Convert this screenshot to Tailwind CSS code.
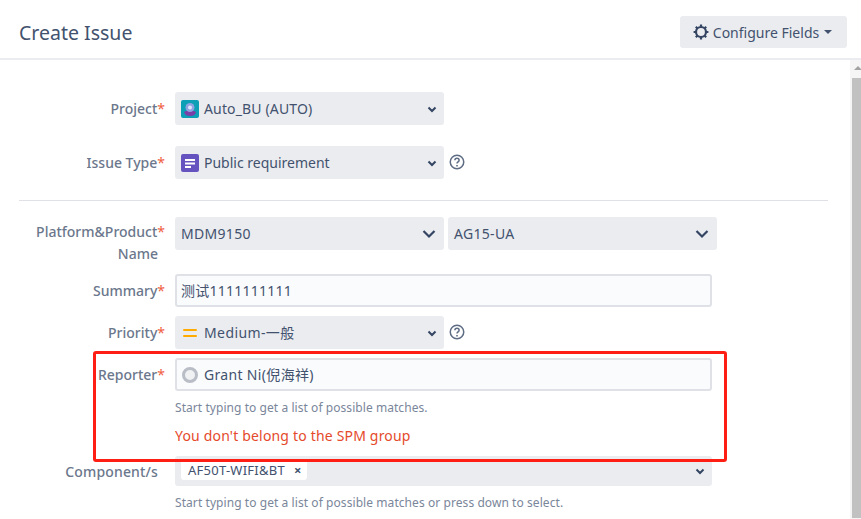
<!DOCTYPE html>
<html lang="en">
<head>
  <meta charset="UTF-8" />
  <title>Create Issue</title>
  <script src="https://cdn.jsdelivr.net/npm/@tailwindcss/browser@4"></script>
</head>
<body class="relative w-[861px] h-[519px] overflow-hidden bg-white text-[14px] text-[#6b778c] font-['Noto_Sans','Noto_Sans_CJK_SC',sans-serif]">
  <header class="h-[60px] border-b-2 border-[#ebecf0] pl-[19px] pr-[14px] pt-[16px] flex justify-between items-start">
    <h2 class="text-[19.5px] leading-[34px] text-[#42526e]">Create Issue</h2>
    <button class="h-[32px] w-[167px] bg-[#ebecf0] rounded-[3px] flex items-center justify-center gap-[4px] text-[#42526e]">
      <svg class="w-[16px] h-[16px] -ml-[2px]" viewBox="0 0 16 16" fill="none" stroke="#344563"><circle cx="8" cy="8" r="5" stroke-width="2.2"/><path d="M8 .6v2.4M8 13v2.4M.6 8H3M13 8h2.4M2.8 2.8l1.7 1.7M11.5 11.5l1.7 1.7M2.8 13.2l1.7-1.7M11.5 4.5l1.7-1.7" stroke-width="2.2"/></svg>
      <span>Configure Fields</span>
      <span class="w-0 h-0 border-x-[4px] border-x-transparent border-t-[4px] border-t-[#42526e] ml-[1px]"></span>
    </button>
  </header>

  <!-- scrollbar -->
  <div class="absolute right-0 top-[60px] bottom-0 w-[11px] bg-[#f5f5f5]">
    <div class="ml-[4px] mt-[6px] w-0 h-0 border-x-[4px] border-x-transparent border-b-[4px] border-b-[#a3a3a3]"></div>
    <div class="ml-[2px] mt-[8px] h-[440px] bg-[#c1c1c1]"></div>
  </div>

  <form class="pl-[19px] pr-[33px] pt-[32px]">
    <div class="flex h-[33px]">
      <label class="w-[146px] text-right font-medium leading-[33px]">Project<span class="text-[#f0603f] font-normal">*</span></label>
      <div class="ml-[10px] w-[269px] h-[33px] bg-[#ebecf0] rounded-[3px] flex items-center pl-[6px] pr-[6px] text-[#42526e]">
        <svg class="w-[18px] h-[18px] mr-[5px]" viewBox="0 0 18 18"><rect width="18" height="18" rx="2" fill="#0c9fb5"/><path d="M3 12l2-1 8 0 2 1c-1 3-3 4-6 4s-5-1-6-4z" fill="#7b3fa8"/><circle cx="9" cy="7.5" r="4.5" fill="#8fa3e0"/><circle cx="9" cy="7.5" r="2" fill="#dfe6fb"/></svg>
        <span class="flex-1 tracking-[0.15px]">Auto_BU (AUTO)</span>
        <svg class="w-[12px] h-[12px]" viewBox="0 0 12 12" fill="none" stroke="#344563" stroke-width="2"><path d="M2.5 4.5L6 8l3.5-3.5"/></svg>
      </div>
    </div>
    <div class="flex h-[33px] mt-[21px]">
      <label class="w-[146px] text-right font-medium leading-[33px]">Issue Type<span class="text-[#f0603f] font-normal">*</span></label>
      <div class="ml-[10px] w-[269px] h-[33px] bg-[#ebecf0] rounded-[3px] flex items-center pl-[6px] pr-[6px] text-[#42526e]">
        <svg class="w-[18px] h-[18px] mr-[5px]" viewBox="0 0 18 18"><rect width="18" height="18" rx="2" fill="#6554c0"/><path d="M4 5h10v2H4zM4 8.5h10v2H4zM4 12h6v2H4z" fill="#fff"/></svg>
        <span class="flex-1">Public requirement</span>
        <svg class="w-[12px] h-[12px]" viewBox="0 0 12 12" fill="none" stroke="#344563" stroke-width="2"><path d="M2.5 4.5L6 8l3.5-3.5"/></svg>
      </div>
      <svg class="w-[16px] h-[16px] ml-[5px] mt-[8px]" viewBox="0 0 16 16" fill="none" stroke="#5e6c84" stroke-width="1.5"><circle cx="8" cy="8" r="6.75"/><path d="M5.9 6.3c0-1.2 1-2 2.1-2s2.1.8 2.1 1.9c0 1.7-2.1 1.6-2.1 3.3"/><path d="M8 11v1.4" stroke-width="1.6"/></svg>
    </div>

    <hr class="mt-[21px] border-t border-[#dfe1e6]" />

    <div class="flex h-[57px] mt-[16px]">
      <label class="w-[146px] text-right font-medium leading-[22px] pt-[4px]">Platform&amp;Product<span class="text-[#f0603f] font-normal">*</span><br /><span class="pr-[7px]">Name</span></label>
      <div class="ml-[10px] w-[269px] h-[33px] bg-[#ebecf0] rounded-[3px] flex items-center pl-[6px] pr-[7px] text-[#42526e]">
        <span class="flex-1 tracking-[0.3px]">MDM9150</span>
        <svg class="w-[16px] h-[16px]" viewBox="0 0 16 16" fill="none" stroke="#344563" stroke-width="2.2"><path d="M2.5 5L8 10.5 13.5 5"/></svg>
      </div>
      <div class="ml-[4px] w-[269px] h-[33px] bg-[#ebecf0] rounded-[3px] flex items-center pl-[6px] pr-[7px] text-[#42526e]">
        <span class="flex-1 tracking-[0.3px]">AG15-UA</span>
        <svg class="w-[16px] h-[16px]" viewBox="0 0 16 16" fill="none" stroke="#344563" stroke-width="2.2"><path d="M2.5 5L8 10.5 13.5 5"/></svg>
      </div>
    </div>

    <div class="flex h-[33px]">
      <label class="w-[146px] text-right font-medium leading-[33px]">Summary<span class="text-[#f0603f] font-normal">*</span></label>
      <div class="ml-[10px] w-[537px] h-[33px] bg-[#fafbfc] border-2 border-[#dfe1e6] rounded-[3px] flex items-center pl-[4px] text-[#42526e] tracking-[0.25px]">测试1111111111</div>
    </div>

    <div class="flex h-[33px] mt-[9px]">
      <label class="w-[146px] text-right font-medium leading-[33px]">Priority<span class="text-[#f0603f] font-normal">*</span></label>
      <div class="ml-[10px] w-[269px] h-[33px] bg-[#ebecf0] rounded-[3px] flex items-center pl-[8px] pr-[6px] text-[#42526e]">
        <svg class="w-[14px] h-[10px] mr-[7px]" viewBox="0 0 14 10" fill="#ffab00"><rect y="1" width="14" height="2" rx="1"/><rect y="7" width="14" height="2" rx="1"/></svg>
        <span class="flex-1 tracking-[0.4px]">Medium-一般</span>
        <svg class="w-[12px] h-[12px]" viewBox="0 0 12 12" fill="none" stroke="#344563" stroke-width="2"><path d="M2.5 4.5L6 8l3.5-3.5"/></svg>
      </div>
      <svg class="w-[16px] h-[16px] ml-[5px] mt-[8px]" viewBox="0 0 16 16" fill="none" stroke="#5e6c84" stroke-width="1.5"><circle cx="8" cy="8" r="6.75"/><path d="M5.9 6.3c0-1.2 1-2 2.1-2s2.1.8 2.1 1.9c0 1.7-2.1 1.6-2.1 3.3"/><path d="M8 11v1.4" stroke-width="1.6"/></svg>
    </div>

    <div class="flex h-[33px] mt-[9px]">
      <label class="w-[146px] text-right font-medium leading-[33px]">Reporter<span class="text-[#f0603f] font-normal">*</span></label>
      <div class="ml-[10px] w-[537px] h-[33px] bg-[#fafbfc] border-2 border-[#dfe1e6] rounded-[3px] flex items-center pl-[5px] text-[#42526e]">
        <span class="w-[16px] h-[16px] rounded-full border-[3px] border-[#b9bdc6] bg-[#f0f1f3] mr-[6px]"></span>
        <span class="tracking-[0.33px]">Grant Ni(倪海祥)</span>
      </div>
    </div>
    <p class="ml-[156px] mt-[8px] text-[12px] leading-[17px] text-[#7a869a] tracking-[0.06px]">Start typing to get a list of possible matches.</p>
    <p class="ml-[156px] mt-[10px] leading-[20px] text-[#e5492b] tracking-[0.18px]">You don't belong to the SPM group</p>

    <div class="flex h-[30px] mt-[10px]">
      <label class="w-[146px] text-right font-medium leading-[32px] pr-[7px] tracking-[0.15px]">Component/s</label>
      <div class="ml-[10px] w-[537px] h-[30px] bg-[#ebecf0] rounded-[3px] flex items-start pl-[6px] pr-[6px] text-[#42526e]">
        <span class="h-[20px] mt-[4px] pl-[7px] pr-[5px] bg-white rounded-[3px] flex items-center gap-[9px] text-[13px] leading-none text-[#42526e] tracking-[0.25px]">AF50T-WIFI&amp;BT<span class="text-[13px] font-bold leading-none">×</span></span>
        <svg class="w-[12px] h-[12px] ml-auto mt-[9px]" viewBox="0 0 12 12" fill="none" stroke="#344563" stroke-width="2"><path d="M2.5 4.5L6 8l3.5-3.5"/></svg>
      </div>
    </div>
    <p class="ml-[156px] mt-[8px] text-[12px] leading-[17px] text-[#7a869a] tracking-[0.07px]">Start typing to get a list of possible matches or press down to select.</p>
  </form>

  <!-- red annotation drawn over the form -->
  <div class="absolute left-[93px] top-[351px] w-[634px] h-[111px] border-[3px] border-[#fe1e14] rounded-[3px]"></div>
</body>
</html>
